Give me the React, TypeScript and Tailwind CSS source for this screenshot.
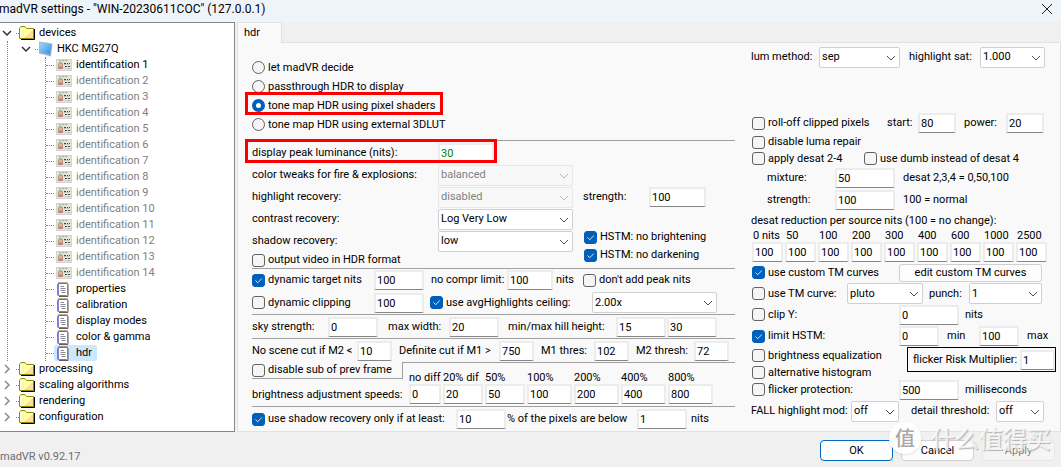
import { useId, type ReactNode } from "react";

function Chevron({ className }: { className: string }) {
  return (
    <svg viewBox="0 0 10 10" className={className} fill="none" stroke="currentColor" aria-hidden="true">
      <path d="M1 3 L5 7 L9 3" />
    </svg>
  );
}

function Num({ value, label, id, w, color = "text-black" }: { value: string; label?: string; id?: string; w: string; color?: string }) {
  return (
    <input
      id={id}
      type="text"
      aria-label={label}
      defaultValue={value}
      className={`${w} ${color} h-5 shrink-0 border-2 border-b border-[#ececec] border-b-[#868686] bg-white pl-px outline-none`}
    />
  );
}

function Field({ label, lw, value, w, color }: { label: string; lw: string; value: string; w: string; color?: string }) {
  const id = useId();
  return (
    <div className="flex shrink-0 items-center">
      <label htmlFor={id} className={`${lw} shrink-0`}>{label}</label>
      <Num id={id} value={value} w={w} color={color} />
    </div>
  );
}

function Pick({ label, name, lw = "", w, options, disabled = false }: { label?: string; name?: string; lw?: string; w: string; options: string[]; disabled?: boolean }) {
  const id = useId();
  return (
    <div className="flex shrink-0 items-center">
      {label && <label htmlFor={id} className={`${lw} shrink-0`}>{label}</label>}
      <span className={`${w} relative block h-[21px] shrink-0`}>
        <select
          id={id}
          aria-label={name}
          disabled={disabled}
          className="h-full w-full appearance-none rounded-[2px] border border-[#d0d0d0] bg-white pl-0.5 text-black opacity-100 outline-none disabled:border-[#e8e8e8] disabled:bg-[#f8f8f8] disabled:text-[#808080]"
        >
          {options.map((o) => <option key={o}>{o}</option>)}
        </select>
        <Chevron className={`pointer-events-none absolute top-1.5 right-1 size-[10px] ${disabled ? "text-[#b8b8b8]" : "text-[#505050]"}`} />
      </span>
    </div>
  );
}

function Check({ label, checked = false, w = "" }: { label: string; checked?: boolean; w?: string }) {
  return (
    <label className={`${w} flex shrink-0 items-center gap-[3px]`}>
      <span className="relative block size-[13px] shrink-0">
        <input
          type="checkbox"
          defaultChecked={checked}
          className="peer block size-[13px] appearance-none rounded-[3px] border border-[#626262] bg-[#f5f5f5] checked:border-[#005fb8] checked:bg-[#005fb8]"
        />
        <svg viewBox="0 0 13 13" className="pointer-events-none absolute inset-0 hidden size-[13px] peer-checked:block" fill="none" stroke="#d6e8f8" aria-hidden="true">
          <path d="M3.5 6.5 L5.7 8.7 L9.8 4.6" />
        </svg>
      </span>
      {label}
    </label>
  );
}

function Radio({ label, checked = false, children }: { label: string; checked?: boolean; children?: ReactNode }) {
  return (
    <div className="relative flex h-[19px] items-center">
      <label className="flex items-center gap-[3px]">
        <input
          type="radio"
          name="hdr-mode"
          defaultChecked={checked}
          className="block size-[13px] appearance-none rounded-full border border-[#626262] bg-[#f5f5f5] checked:border-4 checked:border-[#005fb8] checked:bg-white"
        />
        {label}
      </label>
      {children}
    </div>
  );
}

function Marker({ className }: { className: string }) {
  return <span className={`pointer-events-none absolute border-[3px] border-[#fb0000] ${className}`} />;
}

function Line() {
  return <div className="h-px bg-[#a0a0a0]" />;
}

function Folder() {
  return (
    <svg viewBox="0 0 16 14" className="h-[14px] w-4 shrink-0" aria-hidden="true">
      <path d="M2 13.5 H15.5 V3" fill="none" stroke="#000" />
      <path d="M0.5 12.5 V2.5 L2 0.5 H6 L7.5 2.5 H14.5 V12.5 Z" fill="#ffffa8" stroke="#8f8a00" />
      <path d="M5 12 L14 4 V12 Z" fill="#ffdc9c" />
      <path d="M1.5 11.5 V3.5 H13.5" fill="none" stroke="#fffff0" />
    </svg>
  );
}

function Monitor() {
  return (
    <svg viewBox="0 0 16 16" className="size-4 shrink-0" aria-hidden="true">
      <defs>
        <linearGradient id="screen" x1="0" y1="0" x2="1" y2="1">
          <stop offset="0" stopColor="#9adcff" />
          <stop offset="1" stopColor="#2f8ce6" />
        </linearGradient>
      </defs>
      <path d="M1 0.500 L14.500 2.500 L13 15.500 L1 12.500 Z" fill="#a5afcc" />
      <path d="M1.500 1.500 L13.500 3.500 L12 13.500 L1.500 11 Z" fill="url(#screen)" />
    </svg>
  );
}

function Card() {
  return (
    <svg viewBox="0 0 16 12" className="h-3 w-4 shrink-0" aria-hidden="true">
      <rect x="0.5" y="0.5" width="15" height="11" fill="#e2e5d6" stroke="#d3d5ca" />
      <path d="M3 1.5 H5 M6 1.5 H8 M9 1.5 H11" stroke="#a3ad92" />
      <path d="M2 8 V5 L3.500 3 H5.500 L7 5 V8 Z" fill="#b0968a" />
      <path d="M2 10 V8.500 L3.500 7.500 H5.500 L7 8.500 V10 Z" fill="#c4807a" />
      <circle cx="4.500" cy="6" r="1.700" fill="#e0b49e" />
      <path d="M8 4.500 H10 M11 4.500 H12 M13 4.500 H14 M9 7.500 H11 M12 7.500 H14" stroke="#40484c" />
      <path d="M8.500 5.500 H9.500 M11.500 5.500 H12.500" stroke="#8c9690" />
      <path d="M9 9.500 H10.500 M12 9.500 H14" stroke="#b4c4a8" />
    </svg>
  );
}

function Notepad() {
  return (
    <svg viewBox="0 0 14 16" className="h-4 w-[14px] shrink-0" aria-hidden="true">
      <path d="M3 15.500 H12 V3" fill="none" stroke="#606060" />
      <rect x="2" y="2.500" width="9.500" height="12" rx="1" fill="#fff" stroke="#80808a" />
      <path d="M2 3 V14.500" stroke="#6c6cd8" strokeWidth="1.500" />
      <path d="M3 3 V1 M5 3 V1 M7 3 V1 M9 3 V1 M11 3 V1" stroke="#8a5a30" />
      <path d="M4.500 5.500 H8 M4.500 7.500 H9.500 M4.500 9.500 H9.500 M5.500 11.500 H9.500" stroke="#8c8c8c" />
    </svg>
  );
}

function Root({ label, open = false }: { label: string; open?: boolean }) {
  return (
    <li className="flex h-4 items-center">
      <Chevron className={`mr-1 ml-0.5 size-[10px] stroke-[1.5] ${open ? "text-[#303030]" : "-rotate-90 text-[#8c8c8c]"}`} />
      <span className="w-[3px] border-t border-dotted border-[#808080]" />
      <Folder />
      <span className="ml-1">{label}</span>
    </li>
  );
}

function Leaf({ label, kind, selected = false }: { label: string; kind: "card" | "page"; selected?: boolean }) {
  const dim = kind === "card" && label !== "identification 1";
  return (
    <li className="flex h-4 items-center">
      <span className="w-2 border-t border-dotted border-[#808080]" />
      <span className={`flex h-4 items-center rounded-[2px] pr-[5px] pl-0.5 ${selected ? "bg-[#cce8ff]" : ""} ${dim ? "text-[#808080]" : ""}`}>
        <span className="flex w-5 items-center">{kind === "card" ? <Card /> : <Notepad />}</span>
        {label}
      </span>
    </li>
  );
}

const ids = Array.from({ length: 14 }, (_, i) => `identification ${i + 1}`);
const pages = ["properties", "calibration", "display modes", "color & gamma", "hdr"];

function Tree() {
  return (
    <nav className="w-[235px] shrink-0 border-t border-r border-b border-[#828790] bg-white pt-0.5">
      <ul>
        <Root label="devices" open />
        <li className="ml-[7px] border-l border-dotted border-[#808080]">
          <div className="flex h-4 items-center">
            <Chevron className="mr-1 ml-[13px] size-[10px] stroke-[1.5] text-[#303030]" />
            <span className="w-[3px] border-t border-dotted border-[#808080]" />
            <Monitor />
            <span className="ml-[3px]">HKC MG27Q</span>
          </div>
          <ul className="ml-[37px] border-l border-dotted border-[#808080]">
            {ids.map((n) => <Leaf key={n} label={n} kind="card" />)}
            {pages.map((n) => <Leaf key={n} label={n} kind="page" selected={n === "hdr"} />)}
          </ul>
        </li>
        <Root label="processing" />
        <Root label="scaling algorithms" />
        <Root label="rendering" />
        <Root label="configuration" />
      </ul>
    </nav>
  );
}

const speeds = [
  { h: "no diff", v: "0", w: "w-[32px]" },
  { h: "20% dif", v: "20", w: "w-10" },
  { h: "50%", v: "50", w: "w-10" },
  { h: "100%", v: "100", w: "w-[45px]" },
  { h: "200%", v: "200", w: "w-[45px]" },
  { h: "400%", v: "400", w: "w-[45px]" },
  { h: "800%", v: "800", w: "w-[45px]" },
];

function LeftSide() {
  return (
    <div className="min-w-0 flex-1 pt-[15px] pr-4">
      <Radio label="let madVR decide" />
      <Radio label="passthrough HDR to display" />
      <Radio label="tone map HDR using pixel shaders" checked>
        <Marker className="-top-1 -left-[7px] h-[23px] w-[198px]" />
      </Radio>
      <Radio label="tone map HDR using external 3DLUT" />
      <div className="pt-1.5"><Line /></div>
      <div className="relative flex h-[23px] items-center">
        <Field label="display peak luminance (nits):" lw="w-[186px]" value="30" w="w-[56px]" color="text-[#008000]" />
        <Marker className="-top-0.5 -left-[7px] h-6 w-[252px]" />
      </div>
      <div className="flex h-[104px]">
        <div className="w-[331px] shrink-0">
          <div className="flex h-[22px] items-center"><Pick label="color tweaks for fire & explosions:" lw="w-[186px]" w="w-[135px]" options={["balanced"]} disabled /></div>
          <div className="flex h-[22px] items-center"><Pick label="highlight recovery:" lw="w-[186px]" w="w-[135px]" options={["disabled"]} disabled /></div>
          <div className="flex h-[22px] items-center"><Pick label="contrast recovery:" lw="w-[186px]" w="w-[135px]" options={["Log Very Low", "none"]} /></div>
          <div className="flex h-[22px] items-center"><Pick label="shadow recovery:" lw="w-[186px]" w="w-[135px]" options={["low", "none"]} /></div>
          <div className="flex h-4 items-center"><Check label="output video in HDR format" /></div>
        </div>
        <div className="pt-[22px]">
          <div className="flex h-[22px] items-center"><Field label="strength:" lw="w-[66px]" value="100" w="w-[57px]" /></div>
          <div className="pt-5 pl-px">
            <div className="flex h-[18px] items-center"><Check label="HSTM: no brightening" checked /></div>
            <div className="flex h-[18px] items-center"><Check label="HSTM: no darkening" checked /></div>
          </div>
        </div>
      </div>
      <Line />
      <div className="flex h-[22px] items-center">
        <Check label="dynamic target nits" checked w="w-[122px]" />
        <Num label="target nits" value="100" w="w-[50px]" />
        <div className="pl-[7px]"><Field label="no compr limit:" lw="w-[76px]" value="100" w="w-[46px]" /></div>
        <span className="w-[30px] pl-[3px]">nits</span>
        <Check label="don't add peak nits" />
      </div>
      <div className="flex h-[23px] items-center">
        <Check label="dynamic clipping" w="w-[122px]" />
        <Num label="clipping" value="100" w="w-[50px]" />
        <div className="pl-1.5"><Check label="use avgHighlights ceiling:" checked w="w-[162px]" /></div>
        <Pick name="ceiling" w="w-[125px]" options={["2.00x"]} />
      </div>
      <Line />
      <div className="flex h-[23px] items-center">
        <Field label="sky strength:" lw="w-[76px]" value="0" w="w-[50px]" />
        <div className="pl-2.5"><Field label="max width:" lw="w-[61px]" value="20" w="w-[50px]" /></div>
        <div className="pl-[9px]"><Field label="min/max hill height:" lw="w-[108px]" value="15" w="w-[50px]" /></div>
        <div className="pl-px"><Num label="max hill height" value="30" w="w-[50px]" /></div>
      </div>
      <Line />
      <div className="flex h-[23px] items-center">
        <Field label="No scene cut if M2 <" lw="w-[105px]" value="10" w="w-[35px]" />
        <div className="pl-[7px]"><Field label="Definite cut if M1 >" lw="w-[100px]" value="750" w="w-[35px]" /></div>
        <div className="pl-[7px]"><Field label="M1 thres:" lw="w-[53px]" value="102" w="w-[35px]" /></div>
        <div className="pl-[7px]"><Field label="M2 thresh:" lw="w-[58px]" value="72" w="w-[35px]" /></div>
      </div>
      <div className="flex h-11">
        <div className="w-[151px] shrink-0">
          <div className="flex h-[17px] items-center border-r border-b border-[#a0a0a0]"><Check label="disable sub of prev frame" /></div>
          <div className="flex h-[27px] items-center pt-1">brightness adjustment speeds:</div>
        </div>
        <div className="flex flex-1 gap-0.5 border-t border-[#a0a0a0] pt-[9px] pl-1.5">
          {speeds.map((s) => (
            <label key={s.h} className={`${s.w} flex shrink-0 flex-col`}>
              <span className="h-3 leading-3">{s.h}</span>
              <Num value={s.v} w="w-full" />
            </label>
          ))}
        </div>
      </div>
      <Line />
      <div className="flex h-6 items-center">
        <Check label="use shadow recovery only if at least:" checked w="w-[204px]" />
        <Num label="pixel percentage" value="10" w="w-[50px]" />
        <div className="pl-px"><Field label="% of the pixels are below" lw="w-[130px]" value="1" w="w-[50px]" /></div>
        <span className="pl-1">nits</span>
      </div>
    </div>
  );
}

const desat = ["0 nits", "50", "100", "200", "300", "400", "600", "1000", "2500"];

function RightSide() {
  return (
    <div className="w-[309px] shrink-0 pt-[3px]">
      <div className="flex h-[22px] items-center">
        <Pick label="lum method:" lw="w-[68px]" w="w-[81px]" options={["sep"]} />
        <div className="pl-[9px]"><Pick label="highlight sat:" lw="w-[71px]" w="w-[65px]" options={["1.000"]} /></div>
      </div>
      <div className="mt-11 flex h-[22px] items-center pl-px">
        <Check label="roll-off clipped pixels" w="w-[135px]" />
        <Field label="start:" lw="w-[31px]" value="80" w="w-[38px]" />
        <div className="pl-2"><Field label="power:" lw="w-[42px]" value="20" w="w-[38px]" /></div>
      </div>
      <div className="flex h-4 items-center pl-px"><Check label="disable luma repair" /></div>
      <div className="flex h-[17px] items-center pl-px">
        <Check label="apply desat 2-4" w="w-28" />
        <Check label="use dumb instead of desat 4" />
      </div>
      <div className="flex h-[22px] items-center pl-4">
        <Field label="mixture:" lw="w-[68px]" value="50" w="w-[60px]" />
        <span className="pl-2">desat 2,3,4 = 0,50,100</span>
      </div>
      <div className="flex h-[22px] items-center pl-4">
        <Field label="strength:" lw="w-[68px]" value="100" w="w-[60px]" />
        <span className="pl-2">100 = normal</span>
      </div>
      <div className="flex h-[19px] items-center">desat reduction per source nits (100 = no change):</div>
      <div className="flex gap-0.5 pl-px">
        {desat.map((d) => (
          <label key={d} className="flex w-[31px] shrink-0 flex-col">
            <span className="h-3 pl-px leading-3">{d}</span>
            <Num value="100" w="w-full" />
          </label>
        ))}
      </div>
      <div className="flex h-[21px] items-center pl-px">
        <Check label="use custom TM curves" checked w="w-[147px]" />
        <button type="button" className="h-[18px] w-[143px] rounded-[3px] border border-[#d0d0d0] bg-[#fdfdfd] leading-none">edit custom TM curves</button>
      </div>
      <div className="flex h-[21px] items-center pl-px">
        <Check label="use TM curve:" w="w-[95px]" />
        <Pick name="TM curve" w="w-[76px]" options={["pluto"]} />
        <div className="pl-1.5"><Pick label="punch:" lw="w-10" w="w-[73px]" options={["1"]} /></div>
      </div>
      <div className="flex h-[21px] items-center pl-px">
        <Check label="clip Y:" w="w-[147px]" />
        <Num label="clip nits" value="0" w="w-[60px]" />
        <span className="pl-1.5">nits</span>
      </div>
      <div className="flex h-[22px] items-center pl-px">
        <Check label="limit HSTM:" checked w="w-[147px]" />
        <Num label="minimum" value="0" w="w-10" />
        <span className="w-10 pl-2">min</span>
        <Num label="maximum" value="100" w="w-10" />
        <span className="pl-2">max</span>
      </div>
      <div className="flex pl-px">
        <div className="w-[155px]">
          <div className="flex h-[17px] items-center"><Check label="brightness equalization" /></div>
          <div className="flex h-[17px] items-center"><Check label="alternative histogram" /></div>
        </div>
        <div className="flex h-[25px] items-center border border-black pl-[5px]">
          <Field label="flicker Risk Multiplier:" lw="w-[107px]" value="1" w="w-[35px]" />
        </div>
      </div>
      <div className="flex h-[17px] items-center pl-px">
        <Check label="flicker protection:" w="w-[147px]" />
        <Num label="flicker protection time" value="500" w="w-[60px]" />
        <span className="pl-1.5">milliseconds</span>
      </div>
      <div className="flex h-[26px] items-center">
        <Pick label="FALL highlight mod:" lw="w-[100px]" w="w-12" options={["off"]} />
        <div className="pl-3"><Pick label="detail threshold:" lw="w-[85px]" w="w-12" options={["off"]} /></div>
      </div>
    </div>
  );
}

export default function App() {
  return (
    <div className="flex min-h-screen flex-col overflow-hidden bg-[#f0f0f0] font-['Roboto',sans-serif] text-[11px] leading-4 whitespace-nowrap text-black">
      <header className="flex h-[22px] items-center justify-between bg-[#eff4fa] pr-2 text-xs">
        <h1 className="-ml-px pb-1">madVR settings - "WIN-20230611COC" (127.0.0.1)</h1>
        <button type="button" aria-label="Close" className="pb-1">
          <svg viewBox="0 0 12 12" className="size-3" stroke="#202020" aria-hidden="true"><path d="M1 1 L11 11 M11 1 L1 11" /></svg>
        </button>
      </header>
      <main className="flex flex-1 gap-0.5">
        <Tree />
        <section className="flex min-w-0 flex-1 flex-col">
          <div className="flex h-[21px]" role="tablist">
            <button type="button" role="tab" aria-selected="true" className="w-[45px] border-t border-r border-l border-[#e2e2e2] bg-[#f9f9f9] pl-1.5 text-left">hdr</button>
            <div className="flex-1 border-b border-[#e2e2e2]" />
          </div>
          <div className="flex flex-1 border-r border-b border-l border-[#e2e2e2] bg-[#f9f9f9] pl-[14px]">
            <LeftSide />
            <RightSide />
          </div>
        </section>
      </main>
      <footer className="relative flex h-[35px] items-start justify-between pr-[6px]">
        <span className="pt-[17px] text-[#6d6d6d]">madVR v0.92.17</span>
        <div className="flex gap-2 pt-2">
          <button type="button" className="h-[21px] w-[73px] rounded-[4px] border border-[#0067c0] bg-[#fdfdfd] leading-none">OK</button>
          <button type="button" className="h-[21px] w-[73px] rounded-[4px] border border-[#d0d0d0] bg-[#fdfdfd] leading-none">Cancel</button>
          <button type="button" disabled className="h-[21px] w-[73px] rounded-[4px] border border-[#e6e6e6] bg-[#f5f5f5] leading-none text-[#808080]">Apply</button>
        </div>
        <div className="pointer-events-none absolute -top-2.5 right-2.5 flex items-center gap-2.5 font-['Noto_Sans_CJK_SC',sans-serif] font-medium">
          <span className="flex size-8 items-center justify-center rounded-full bg-white/90 text-xl text-[#a8a8a8] shadow-sm">值</span>
          <span className="text-2xl text-white/75 text-shadow-[1px_1px_1px_#b4b4b4]">什么值得买</span>
        </div>
      </footer>
    </div>
  );
}
